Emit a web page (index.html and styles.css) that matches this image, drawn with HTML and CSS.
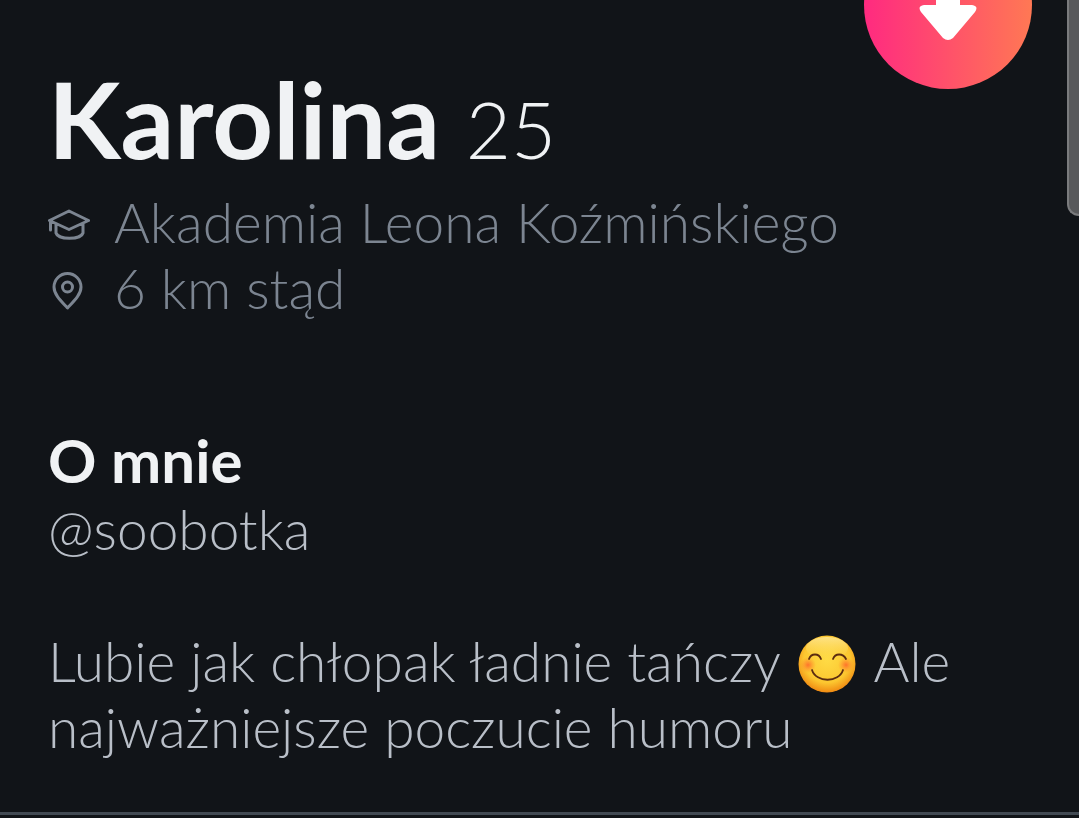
FILE: index.html
```html
<!DOCTYPE html>
<html lang="pl">
<head>
  <meta charset="UTF-8" />
  <meta name="viewport" content="width=device-width, initial-scale=1.0" />
  <title>Karolina, 25</title>
  <link rel="stylesheet" href="styles.css">
</head>
<body>

<main class="profile">
  <button type="button" class="close-btn" aria-label="Zamknij profil">
    <svg viewBox="0 0 168 168" aria-hidden="true">
      <path d="M76 50h16q4 0 4 4v30h12q7 1 3 7L89 117q-5 4-10 0L57 91q-4-6 3-7h12V54q0-4 4-4z" fill="#fff" />
    </svg>
  </button>
  <div class="scroll-thumb"></div>

  <header class="intro">
    <h1 class="name">Karolina <span class="age">25</span></h1>
    <ul class="details">
      <li>
        <svg class="icon" viewBox="0 0 42 42" aria-hidden="true">
          <path d="M1.500 16.500 21 7l19.500 9.500L21 25.500zM2.500 17v9M8 20v9c2 7 25 7 27 0v-9" />
        </svg>
        Akademia Leona Koźmińskiego
      </li>
      <li>
        <svg class="icon" viewBox="0 0 42 42" aria-hidden="true">
          <path d="M19.500 38C14 32 6 25 6 17a13.500 13.500 0 0 1 27 0c0 8-8 15-13.500 21z" />
          <circle cx="19.500" cy="17" r="5" />
        </svg>
        6 km stąd
      </li>
    </ul>
  </header>

  <section class="about">
    <h2>O mnie</h2>
    <p>@soobotka</p>
    <p class="bio">
      Lubie jak chłopak ładnie tańczy
      <svg class="emoji" viewBox="0 0 58 58" role="img" aria-label="😊">
        <defs>
          <radialGradient id="face" cx="50%" cy="42%" r="58%">
            <stop offset="0" stop-color="#ffdb45" />
            <stop offset="0.7" stop-color="#fcc730" />
            <stop offset="1" stop-color="#f08a12" />
          </radialGradient>
          <linearGradient id="shine" x1="0" y1="0" x2="0" y2="1">
            <stop offset="0" stop-color="#fff5c0" stop-opacity="0.6" />
            <stop offset="1" stop-color="#ffe36a" stop-opacity="0" />
          </linearGradient>
          <radialGradient id="cheek">
            <stop offset="0" stop-color="#ff6a2b" stop-opacity="0.9" />
            <stop offset="1" stop-color="#ff8a2b" stop-opacity="0" />
          </radialGradient>
        </defs>
        <circle cx="29" cy="29" r="28.500" fill="url(#face)" />
        <ellipse cx="29" cy="13" rx="21" ry="11" fill="url(#shine)" />
        <circle cx="10" cy="30" r="8" fill="url(#cheek)" />
        <circle cx="48" cy="30" r="8" fill="url(#cheek)" />
        <path d="M11 24c2-6 10-6 12 0M35 24c2-6 10-6 13 0M14 35c4 13 27 13 31 0" fill="none" stroke="#5c2c10" stroke-width="1.800" stroke-linecap="round" />
      </svg>
      Ale<br>
      najważniejsze poczucie humoru
    </p>
  </section>
</main>

</body>
</html>
```

FILE: styles.css
```css
* {
  box-sizing: border-box;
}

body {
  margin: 0;
  background-color: #111418;
  color: #b9bfc8;
  font-family: Lato, "Open Sans", sans-serif;
  font-size: 55px;
  font-weight: 300;
  line-height: 66px;
  overflow: hidden;
}

.profile {
  position: relative;
  padding: 62px 48px 52px;
  border-bottom: 3px solid #424a53;
}

.close-btn {
  position: absolute;
  top: -79px;
  right: 47px;
  width: 168px;
  height: 168px;
  padding: 0;
  border: none;
  border-radius: 50%;
  background: linear-gradient(to right, #ff2a80, #ff7854);
  cursor: pointer;
}

.close-btn svg {
  display: block;
  width: 100%;
}

.scroll-thumb {
  position: absolute;
  top: 0;
  right: 0;
  width: 12px;
  height: 216px;
  border: 2px solid #7b7c7e;
  border-top: none;
  border-right: none;
  border-bottom-left-radius: 12px;
  background-color: #58595b;
}

h1,
h2,
p,
ul {
  margin: 0;
}

.name {
  color: #f0f2f4;
  font-size: 106px;
  font-weight: 700;
  line-height: 112px;
}

.age {
  font-size: 78px;
  font-weight: 300;
}

.details {
  padding: 0;
  margin-top: 4px;
  color: #7c8591;
  list-style: none;
}

.details li {
  display: flex;
  align-items: center;
  gap: 24px;
}

.icon {
  flex: none;
  width: 42px;
  height: 42px;
  margin-top: 6px;
  fill: none;
  stroke: #7c8591;
  stroke-width: 3;
  stroke-linejoin: round;
  stroke-linecap: round;
}

.about {
  margin-top: 105px;
}

.about h2 {
  margin-bottom: 2px;
  color: #f0f2f4;
  font-size: 60px;
  font-weight: 700;
  line-height: 68px;
}

.bio {
  margin-top: 66px;
}

.emoji {
  width: 58px;
  height: 58px;
  margin: 0 4px;
  vertical-align: -11px;
}
```
